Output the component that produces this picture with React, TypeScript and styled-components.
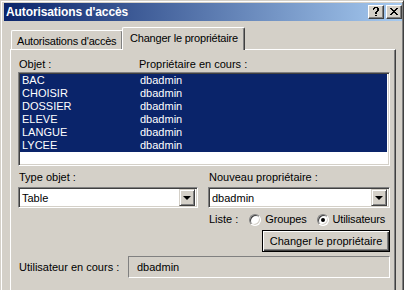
import styled, { createGlobalStyle } from "styled-components";

const GlobalStyle = createGlobalStyle`
  html, body {
    margin: 0;
    padding: 0;
    background: #ffffff;
    overflow: hidden;
  }
  body {
    font-family: "Liberation Sans", Arial, sans-serif;
    font-size: 11px;
    color: #000;
  }
  * {
    box-sizing: border-box;
  }
`;

const rows = [
  { name: "BAC", owner: "dbadmin" },
  { name: "CHOISIR", owner: "dbadmin" },
  { name: "DOSSIER", owner: "dbadmin" },
  { name: "ELEVE", owner: "dbadmin" },
  { name: "LANGUE", owner: "dbadmin" },
  { name: "LYCEE", owner: "dbadmin" },
];

const App = () => {
  return (
    <>
      <GlobalStyle />
      <Window>
        <TitleBar>
          <Title>Autorisations d'accès</Title>
          <TitleButtons>
            <CaptionButton>
              <svg width="8" height="9" viewBox="0 0 8 9" shapeRendering="crispEdges">
                <path d="M1 1h1v2H1zM2 0h4v1H2zM6 1h1v3H6zM5 4h1v1H5zM3 5h2v2H3zM3 8h2v1H3z" fill="#000" />
                <path d="M2 1h1v1H2zM5 1h1v3H5zM4 4h1v1H4z" fill="#000" />
              </svg>
            </CaptionButton>
            <CaptionButton>
              <svg width="8" height="7" viewBox="0 0 8 7" shapeRendering="crispEdges">
                <path d="M0 0h2v1H0zM6 0h2v1H6zM1 1h2v1H1zM5 1h2v1H5zM2 2h4v1H2zM3 3h2v1H3zM2 4h4v1H2zM1 5h2v1H1zM5 5h2v1H5zM0 6h2v1H0zM6 6h2v1H6z" fill="#000" />
              </svg>
            </CaptionButton>
          </TitleButtons>
        </TitleBar>

        <TabRow>
          <Tab $w={112}>Autorisations d'accès</Tab>
          <Tab $w={123} $active>
            Changer le propriétaire
          </Tab>
        </TabRow>

        <Panel>
          <ListHeader>
            <HeaderCell>Objet :</HeaderCell>
            <HeaderCell>Propriétaire en cours :</HeaderCell>
          </ListHeader>
          <ListView>
            {rows.map((r) => (
              <ListRow key={r.name} $selected>
                <Cell>{r.name}</Cell>
                <Cell>{r.owner}</Cell>
              </ListRow>
            ))}
          </ListView>

          <FormGrid>
            <Field>
              <Label>Type objet :</Label>
              <Combo>
                <ComboText>Table</ComboText>
                <ComboButton>
                  <Arrow />
                </ComboButton>
              </Combo>
            </Field>
            <Field>
              <Label>Nouveau propriétaire :</Label>
              <Combo>
                <ComboText>dbadmin</ComboText>
                <ComboButton>
                  <Arrow />
                </ComboButton>
              </Combo>
              <RadioRow>
                <Label>Liste :</Label>
                <RadioOption>
                  <Radio />
                  Groupes
                </RadioOption>
                <RadioOption>
                  <Radio $checked />
                  Utilisateurs
                </RadioOption>
              </RadioRow>
              <ButtonRow>
                <DefaultButton>Changer le propriétaire</DefaultButton>
              </ButtonRow>
            </Field>
          </FormGrid>

          <UserRow>
            <Label>Utilisateur en cours :</Label>
            <ReadOnlyBox>dbadmin</ReadOnlyBox>
          </UserRow>
        </Panel>
      </Window>
    </>
  );
};

export default App;

const Window = styled.div`
  width: 404px;
  height: 310px;
  background: #d4d0c8;
  border: 1px solid;
  border-color: #d4d0c8 #404040 #404040 #d4d0c8;
  box-shadow: inset 1px 1px #ffffff, inset -1px -1px #808080;
  padding: 2px 1px 2px 3px;
  display: flex;
  flex-direction: column;
`;

const TitleBar = styled.div`
  height: 18px;
  display: flex;
  align-items: center;
  justify-content: space-between;
  padding: 0 0 0 2px;
  background: linear-gradient(to right, #0a246a, #a6caf0);
`;

const Title = styled.div`
  color: #ffffff;
  font-weight: bold;
  font-size: 12px;
  letter-spacing: -0.1px;
`;

const TitleButtons = styled.div`
  display: flex;
  gap: 2px;
`;

const CaptionButton = styled.div`
  width: 16px;
  height: 14px;
  background: #d4d0c8;
  border: 1px solid;
  border-color: #ffffff #404040 #404040 #ffffff;
  box-shadow: inset -1px -1px #808080;
  display: flex;
  align-items: center;
  justify-content: center;
  padding-bottom: 1px;
`;

const TabRow = styled.div`
  height: 22px;
  margin-top: 6px;
  padding-left: 7px;
  display: flex;
  align-items: flex-end;
  position: relative;
  z-index: 1;
`;

const Tab = styled.div<{ $active?: boolean; $w: number }>`
  width: ${(p) => p.$w}px;
  height: ${(p) => (p.$active ? 23 : 19)}px;
  margin-bottom: ${(p) => (p.$active ? -1 : 0)}px;
  margin-left: ${(p) => (p.$active ? -1 : 0)}px;
  padding: ${(p) => (p.$active ? "4px 0 0 7px" : "4px 0 0 5px")};
  background: #d4d0c8;
  border-top: 1px solid #ffffff;
  border-left: 1px solid #ffffff;
  border-right: 1px solid #404040;
  border-radius: 2px 2px 0 0;
  box-shadow: inset -1px 0 #808080;
  white-space: nowrap;
  overflow: hidden;
  letter-spacing: -0.2px;
`;

const Panel = styled.div`
  margin: 0 6px 0 6px;
  flex: 1;
  background: #d4d0c8;
  border: 1px solid;
  border-color: #ffffff #404040 #404040 #ffffff;
  box-shadow: inset -1px -1px #808080;
  padding: 8px 5px 0 7px;
  display: flex;
  flex-direction: column;
`;

const ListHeader = styled.div`
  display: grid;
  grid-template-columns: 120px 1fr;
  height: 13px;
  line-height: 13px;
  padding-left: 1px;
`;

const HeaderCell = styled.div`
  white-space: nowrap;
`;

const ListView = styled.div`
  margin-top: 1px;
  height: 94px;
  background: #ffffff;
  border: 1px solid;
  border-color: #808080 #ffffff #ffffff #808080;
  box-shadow: inset 1px 1px #404040, inset -1px -1px #d4d0c8;
  padding: 1px 2px 1px 1px;
  display: flex;
  flex-direction: column;
`;

const ListRow = styled.div<{ $selected?: boolean }>`
  height: 13px;
  line-height: 13px;
  display: grid;
  grid-template-columns: 118px 1fr;
  padding-left: 2px;
  background: ${(p) => (p.$selected ? "#0a246a" : "transparent")};
  color: ${(p) => (p.$selected ? "#ffffff" : "#000000")};
`;

const Cell = styled.div`
  white-space: nowrap;
`;

const FormGrid = styled.div`
  margin-top: 5px;
  display: grid;
  grid-template-columns: 180px 1fr;
  column-gap: 10px;
  align-items: start;
`;

const Field = styled.div`
  display: flex;
  flex-direction: column;
`;

const Label = styled.div`
  height: 13px;
  line-height: 13px;
  padding-left: 1px;
  white-space: nowrap;
`;

const Combo = styled.div`
  margin-top: 3px;
  height: 21px;
  background: #ffffff;
  border: 1px solid;
  border-color: #808080 #ffffff #ffffff #808080;
  box-shadow: inset 1px 1px #404040, inset -1px -1px #d4d0c8;
  padding: 2px;
  display: flex;
  align-items: center;
`;

const ComboText = styled.div`
  flex: 1;
  padding-left: 1px;
`;

const ComboButton = styled.div`
  width: 16px;
  height: 17px;
  background: #d4d0c8;
  border: 1px solid;
  border-color: #d4d0c8 #404040 #404040 #d4d0c8;
  box-shadow: inset 1px 1px #ffffff, inset -1px -1px #808080;
  display: flex;
  align-items: center;
  justify-content: center;
`;

const Arrow = styled.span`
  width: 0;
  height: 0;
  border-left: 4px solid transparent;
  border-right: 4px solid transparent;
  border-top: 4px solid #000000;
  margin-top: 1px;
`;

const RadioRow = styled.div`
  margin-top: 5px;
  height: 13px;
  display: flex;
  align-items: center;
  gap: 11px;
`;

const RadioOption = styled.div`
  display: flex;
  align-items: center;
  gap: 4px;
  white-space: nowrap;
  line-height: 13px;
  letter-spacing: -0.15px;
  & + & {
    margin-left: -1px;
  }
`;

const Radio = styled.span<{ $checked?: boolean }>`
  width: 12px;
  height: 12px;
  border-radius: 50%;
  background: #ffffff;
  border: 1px solid;
  border-color: #808080 #ffffff #ffffff #808080;
  box-shadow: inset 1px 1px #404040, inset -1px -1px #d4d0c8;
  display: flex;
  align-items: center;
  justify-content: center;
  &::after {
    content: "";
    width: 4px;
    height: 4px;
    border-radius: 50%;
    background: ${(p) => (p.$checked ? "#000000" : "transparent")};
  }
`;

const ButtonRow = styled.div`
  margin-top: 4px;
  display: flex;
  justify-content: flex-end;
`;

const DefaultButton = styled.div`
  width: 128px;
  height: 22px;
  border: 1px solid #000000;
  background: #d4d0c8;
  box-shadow: inset 1px 1px #ffffff, inset -1px -1px #404040, inset -2px -2px #808080;
  display: flex;
  align-items: center;
  justify-content: center;
  white-space: nowrap;
`;

const UserRow = styled.div`
  margin-top: 4px;
  display: grid;
  grid-template-columns: 110px 1fr;
  align-items: center;
`;

const ReadOnlyBox = styled.div`
  height: 22px;
  background: #d4d0c8;
  border: 1px solid;
  border-color: #808080 #ffffff #ffffff #808080;
  padding-left: 8px;
  display: flex;
  align-items: center;
`;
